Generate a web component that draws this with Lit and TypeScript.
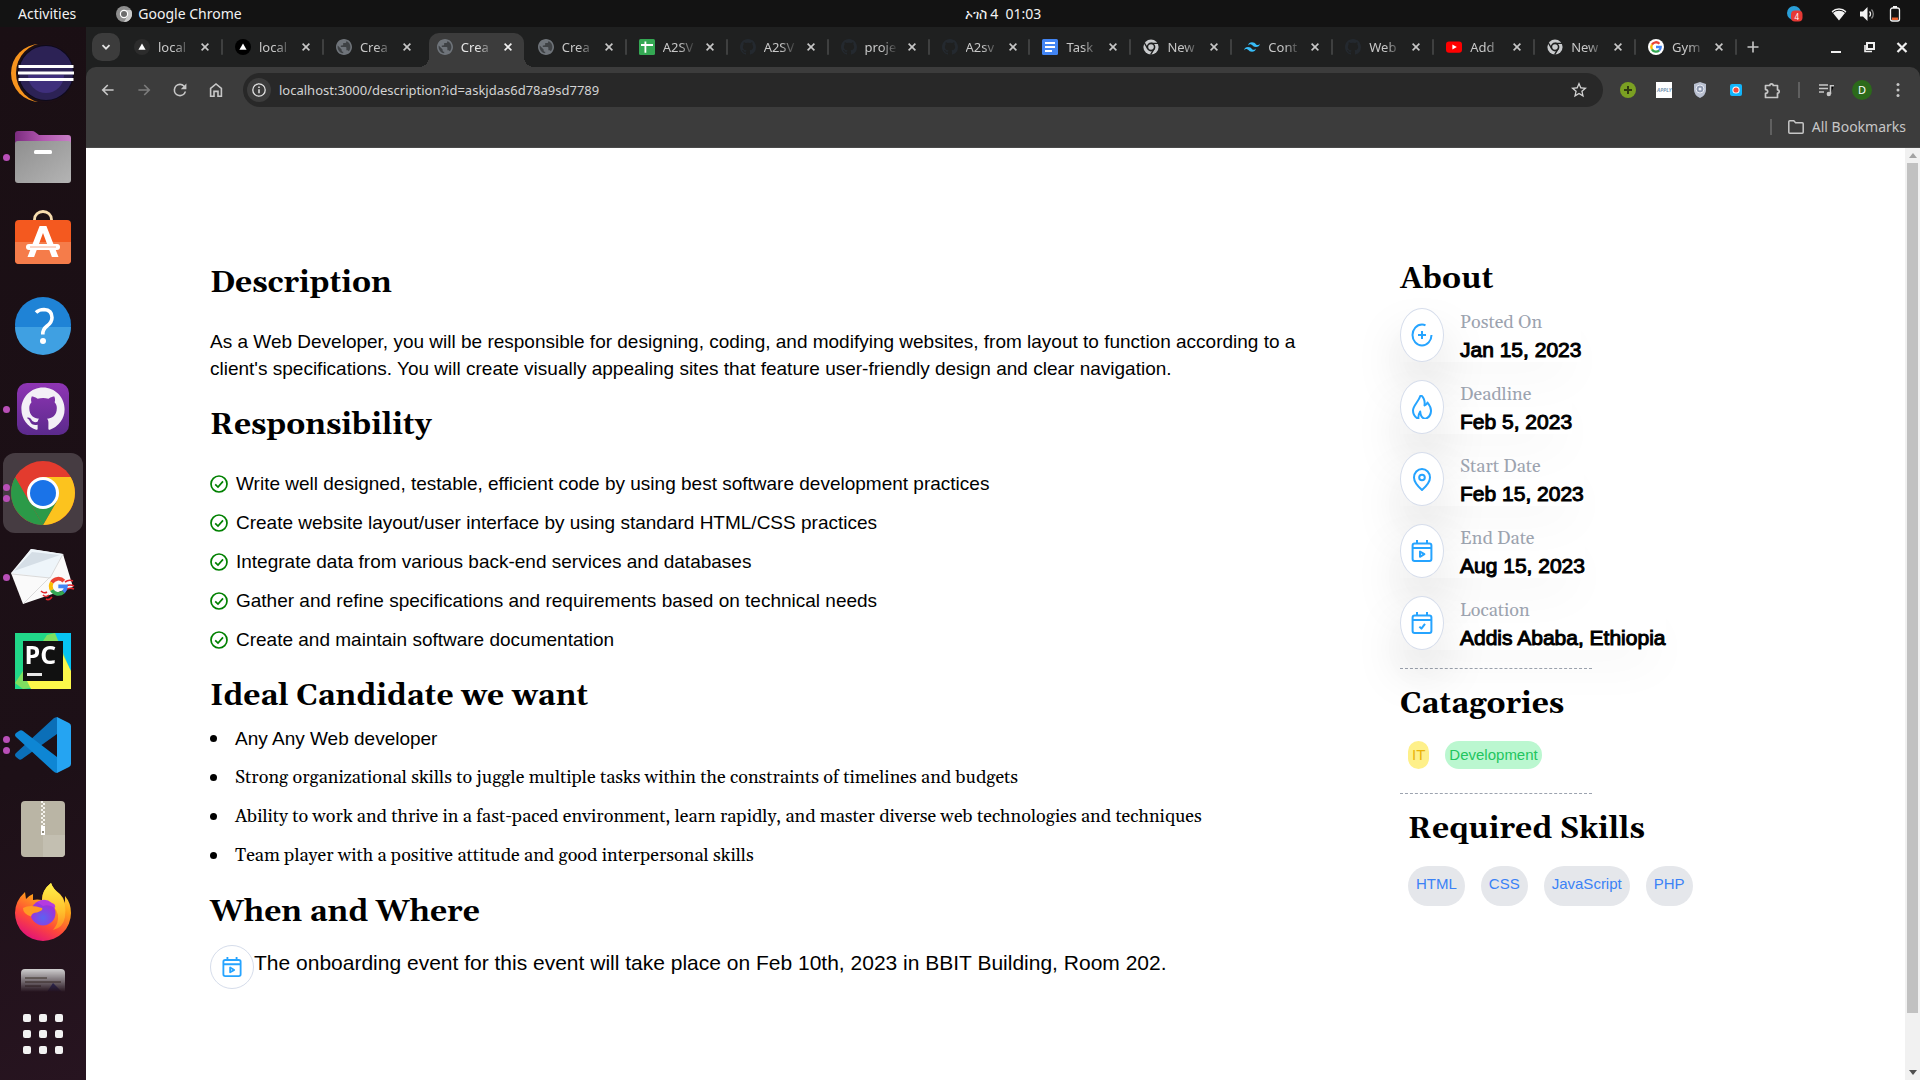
import { LitElement, html, css, svg, nothing } from "lit";
import { customElement } from "lit/decorators.js";
import { classMap } from "lit/directives/class-map.js";

const octocat =
  "M8 0C3.58 0 0 3.58 0 8c0 3.54 2.29 6.53 5.47 7.59.4.07.55-.17.55-.38 0-.19-.01-.82-.01-1.49-2.01.37-2.53-.49-2.69-.94-.09-.23-.48-.94-.82-1.13-.28-.15-.68-.52-.01-.53.63-.01 1.08.58 1.23.82.72 1.21 1.87.87 2.33.66.07-.52.28-.87.51-1.07-1.78-.2-3.64-.89-3.64-3.95 0-.87.31-1.59.82-2.15-.08-.2-.36-1.02.08-2.12 0 0 .67-.21 2.2.82.64-.18 1.32-.27 2-.27s1.36.09 2 .27c1.53-1.04 2.2-.82 2.2-.82.44 1.1.16 1.92.08 2.12.51.56.82 1.27.82 2.15 0 3.07-1.87 3.75-3.65 3.95.29.25.54.73.54 1.48 0 1.07-.01 1.93-.01 2.2 0 .21.15.46.55.38A8.01 8.01 0 0 0 16 8c0-4.42-3.58-8-8-8z";

const googleArcs = svg`
  <g fill="none" stroke-width="4.4">
    <path stroke="#ea4335" d="M4.4 7.6A8.8 8.8 0 0 1 18.4 5.9"/>
    <path stroke="#fbbc05" d="M4.4 16.4A8.8 8.8 0 0 1 4.4 7.6"/>
    <path stroke="#34a853" d="M18 18.4A8.8 8.8 0 0 1 4.4 16.4"/>
    <path stroke="#4285f4" d="M12 12h8.8A8.8 8.8 0 0 1 18 18.4"/>
  </g>`;

/* Favicons, all drawn in a 16px box. */
const triangle = (disc: string) => html`<svg width="16" height="16" viewBox="0 0 16 16">
  <circle cx="8" cy="8" r="8" fill=${disc}/><path fill="#fff" d="M8 4.4l3.6 6.4H4.4z"/></svg>`;
const globe = html`<svg width="16" height="16" viewBox="2 2 20 20">
  <circle cx="12" cy="12" r="9" fill="#3f4245"/>
  <path fill="#6f747a" d="M12 2C6.48 2 2 6.48 2 12s4.48 10 10 10 10-4.48 10-10S17.52 2 12 2zm-1 17.93c-3.95-.49-7-3.85-7-7.93 0-.62.08-1.21.21-1.79L9 15v1c0 1.1.9 2 2 2v1.93zm6.9-2.54c-.26-.81-1-1.39-1.9-1.39h-1v-3c0-.55-.45-1-1-1H8v-2h2c.55 0 1-.45 1-1V7h2c1.1 0 2-.9 2-2v-.41c2.93 1.19 5 4.06 5 7.41 0 2.08-.8 3.97-2.1 5.39z"/></svg>`;
const sheets = html`<svg width="16" height="16" viewBox="0 0 16 16">
  <rect width="16" height="16" rx="1.5" fill="#34a853"/><path stroke="#fff" stroke-width="1.8" d="M2 6h12M6.4 2.4v11.4"/></svg>`;
const hub = html`<svg width="16" height="16" viewBox="0 0 16 16"><path fill="#24292f" d=${octocat}/></svg>`;
const docs = html`<svg width="16" height="16" viewBox="0 0 16 16">
  <rect width="16" height="16" rx="1.5" fill="#4285f4"/><path stroke="#fff" stroke-width="1.8" d="M3 4h10M3 8h10M3 12h7"/></svg>`;
const chromeMono = html`<svg width="16" height="16" viewBox="0 0 16 16">
  <circle cx="8" cy="8" r="7.6" fill="#c9cbcd"/>
  <circle cx="8" cy="8" r="3.6" fill="#c9cbcd" stroke="#1f2020" stroke-width="1.6"/>
  <path stroke="#1f2020" stroke-width="1.4" d="M8 4.4h7M4.9 9.8L1.4 4M11.1 9.8L7.6 15.6"/></svg>`;
const tailwind = html`<svg width="16" height="16" viewBox="2 2 20 20">
  <path fill="#38bdf8" d="M12 6.036c-2.667 0-4.333 1.325-5 3.976 1-1.325 2.167-1.822 3.5-1.491.761.189 1.305.738 1.906 1.345C13.387 10.855 14.522 12 17 12c2.667 0 4.333-1.325 5-3.976-1 1.325-2.166 1.822-3.5 1.491-.761-.189-1.305-.738-1.907-1.345-.98-.99-2.114-2.134-4.593-2.134zM7 12c-2.667 0-4.333 1.325-5 3.976 1-1.326 2.167-1.822 3.5-1.491.761.189 1.305.738 1.906 1.345.98.989 2.115 2.134 4.594 2.134 2.667 0 4.333-1.325 5-3.976-1 1.325-2.167 1.822-3.5 1.491-.761-.189-1.305-.738-1.906-1.345C10.613 13.145 9.478 12 7 12z"/></svg>`;
const youtube = html`<svg width="16" height="16" viewBox="0 0 16 16">
  <rect y="2.4" width="16" height="11.4" rx="3" fill="#f00"/><path fill="#fff" d="M6.4 5.6v5l4.4-2.5z"/></svg>`;
const google = html`<svg width="16" height="16" viewBox="-3 -3 30 30"><circle cx="12" cy="12" r="15" fill="#fff"/>${googleArcs}</svg>`;

interface Tab {
  title: string;
  icon: unknown;
  active?: boolean;
  noRule?: boolean;
}

const tabs: Tab[] = [
  { title: "local", icon: triangle("#2c2c2c") },
  { title: "local", icon: triangle("#000") },
  { title: "Crea", icon: globe, noRule: true },
  { title: "Crea", icon: globe, active: true, noRule: true },
  { title: "Crea", icon: globe },
  { title: "A2SV", icon: sheets },
  { title: "A2SV", icon: hub },
  { title: "proje", icon: hub },
  { title: "A2sv", icon: hub },
  { title: "Task", icon: docs },
  { title: "New", icon: chromeMono },
  { title: "Cont", icon: tailwind },
  { title: "Web", icon: hub },
  { title: "Add", icon: youtube },
  { title: "New", icon: chromeMono },
  { title: "Gym", icon: google },
];

const uiFont = css`"Noto Sans", "Open Sans", sans-serif`;

@customElement("system-bar")
export class SystemBar extends LitElement {
  static styles = css`
    :host {
      display: grid;
      grid-template-columns: 1fr auto 1fr;
      align-items: center;
      height: 27px;
      background: #131313;
      color: #f2f2f2;
      font: 14px/27px ${uiFont};
    }
    .left, .right, .app { display: flex; align-items: center; }
    .left { gap: 40px; padding-left: 18px; }
    .right { justify-content: flex-end; gap: 12px; padding-right: 17px; }
    .app { gap: 6px; }
    .tray { margin-right: 16px; }
    svg { display: block; }
    button { all: unset; }
    time { white-space: pre; padding-left: 86px; }
  `;

  render() {
    return html`
      <div class="left">
        <button>Activities</button>
        <span class="app">
          <svg width="16" height="16" viewBox="0 0 16 16"><circle cx="8" cy="8" r="8" fill="#8e8e8e"/><path fill="#c9c9c9" d="M8 4h7a8 8 0 0 1-7 12l3.4-6z"/><circle cx="8" cy="8" r="4.2" fill="#fff"/><circle cx="8" cy="8" r="3" fill="#6d6d6d"/></svg>
          Google Chrome
        </span>
      </div>
      <time lang="am">ኦገስ 4  01:03</time>
      <div class="right">
        <svg class="tray" width="16" height="16" viewBox="0 0 16 16">
          <circle cx="7" cy="7" r="7" fill="#2a9fd8"/><rect x="4" y="4.600" width="11.500" height="11" rx="4" fill="#e53935"/>
          <text x="7.500" y="13.600" font-size="8" fill="#fff" font-family="Noto Sans">4</text>
        </svg>
        <svg width="16" height="16" viewBox="0 0 16 16"><path fill="#f2f2f2" d="M8 14.500L.6 5.200A11 11 0 0 1 15.400 5.200z"/><path fill="none" stroke="#131313" d="M2 6.500a9 9 0 0 1 12 0"/></svg>
        <svg width="16" height="16" viewBox="0 0 16 16"><path fill="#f2f2f2" d="M1 5.500h3L8.500 1v14L4 10.500H1z"/><path fill="none" stroke="#f2f2f2" stroke-width="1.300" d="M10.500 5.500a3.500 3.500 0 0 1 0 5"/><path fill="none" stroke="#8a8a8a" stroke-width="1.300" d="M12.500 3.500a6.500 6.500 0 0 1 0 9"/></svg>
        <svg width="16" height="16" viewBox="0 0 16 16"><rect x="3.500" y="2" width="9" height="13" rx="2" fill="none" stroke="#f2f2f2" stroke-width="1.300"/><path fill="#f2f2f2" d="M6 0h4v2H6z"/><path fill="#e8602c" d="M5 11.500h6V14H5z"/></svg>
      </div>`;
  }
}

interface DockItem {
  label: string;
  running?: number;
  focused?: boolean;
  art: unknown;
}

const dockItems: DockItem[] = [
  {
    label: "Eclipse",
    art: svg`
      <ellipse cx="29" cy="32" rx="29" ry="29" fill="#f7941e"/>
      <ellipse cx="34" cy="32" rx="29" ry="30" fill="#1c0f16"/>
      <circle cx="35" cy="32" r="28" fill="#0d0a1c"/>
      <circle cx="35" cy="32" r="27" fill="#2c2255"/>
      <path fill="#3f2f7c" d="M17 34h36a18 18 0 0 1-36 0z"/>
      <path stroke="#fff" stroke-width="3" d="M7.500 25.600h55M7 32h56M7.500 38.400h55"/>`,
  },
  {
    label: "Files",
    running: 1,
    art: svg`
      <defs><linearGradient id="purple"><stop stop-color="#7b2c7f"/><stop offset=".5" stop-color="#b257b0"/><stop offset="1" stop-color="#c77fc6"/></linearGradient>
      <linearGradient id="steel" x2="1" y2="1"><stop stop-color="#8f8f8f"/><stop offset="1" stop-color="#b4b4b4"/></linearGradient></defs>
      <path fill="url(#purple)" d="M4 9q0-3 3-3h14q2 0 3 1l4 3h29q3 0 3 3v12H4z"/>
      <rect x="4" y="16" width="56" height="42" rx="3" fill="url(#steel)"/>
      <rect x="23" y="25" width="18" height="4" rx="1.500" fill="#fff"/>`,
  },
  {
    label: "Ubuntu Software",
    art: svg`
      <path fill="none" stroke="#f6dcae" stroke-width="2.800" d="M23.500 13V10.500a8.500 8 0 0 1 17 0V13"/>
      <rect x="4" y="11" width="56" height="44" rx="4" fill="#f4591f"/>
      <path fill="#f57c4a" d="M4 33h56v18q0 4-4 4H8q-4 0-4-4z"/>
      <path fill="#fff" fill-rule="evenodd" d="M28.600 17h6.800L47.500 48h-6.600L32 24l-8.900 24h-6.600z"/>
      <rect x="15" y="35" width="34" height="6" rx="3" fill="#fff"/>
      <path stroke="#fac9b4" stroke-width="1.500" d="M19 38h26"/>`,
  },
  {
    label: "Help",
    art: svg`
      <circle cx="32" cy="32" r="28" fill="#1f83d6"/>
      <path fill="#3fa0e2" d="M4 34h56a28 28 0 0 1-56 0z"/>
      <path fill="none" stroke="#fff" stroke-width="3.600" d="M25 19.500q3-3 8-3 8 .5 8 8 0 5-5 8.500-4.500 3.500-4.200 8.500"/>
      <circle cx="32" cy="48" r="3" fill="#fff"/>`,
  },
  {
    label: "GitHub Desktop",
    running: 1,
    art: svg`
      <defs><linearGradient id="violet" x2="0" y2="1"><stop stop-color="#8f35b4"/><stop offset="1" stop-color="#5b2a8c"/></linearGradient></defs>
      <rect x="6" y="6" width="52" height="52" rx="10" fill="url(#violet)"/>
      <path fill="#f3f0f6" transform="translate(10.400 10.600) scale(2.700)" d=${octocat}/>`,
  },
  {
    label: "Google Chrome",
    running: 2,
    focused: true,
    art: svg`
      <circle cx="32" cy="32" r="32" fill="#e33b2e"/>
      <path fill="#2b9a48" d="M4.300 16L18.100 40 32 64A32 32 0 0 1 4.300 16z"/>
      <path fill="#fcc31e" d="M32 16h27.700A32 32 0 0 1 32 64l13.900-24z"/>
      <path fill="#2b9a48" d="M32 64l13.900-24H18.100z"/>
      <path fill="#e33b2e" d="M4.300 16L18.100 40 32 16z"/>
      <circle cx="32" cy="32" r="16" fill="#fff"/><circle cx="32" cy="32" r="13" fill="#1a73e8"/>`,
  },
  {
    label: "Mail",
    running: 1,
    art: svg`
      <path fill="#fafafa" d="M0 28L20 4l32 5 10 33-50 17z"/>
      <path fill="#eef5fa" d="M1 28L20 4l32 5-13 24z"/>
      <path fill="#d5dee6" d="M3 26L21 7l28 3z"/>
      <path fill="none" stroke="#dadada" d="M1 29l38 4L52 9M12 59l27-27"/>
      <g fill="none" stroke="#e2252b" stroke-width="1.600"><path d="M30 46q3 3 6 1M32 50q3 3 6 0M35 54q3 2 6-2M54 37q4-3 8-1M55 41q4-2 8 0M54 45q4-3 9-1"/></g>
      <g transform="translate(37 31) scale(.86)">${googleArcs}</g>`,
  },
  {
    label: "PyCharm",
    art: svg`
      <rect x="4" y="4" width="56" height="56" fill="#21d789"/>
      <path fill="#07c3f2" d="M44 4h16v44z"/><path fill="#a8e34f" d="M36 6l8-2 14 34-20 18-26 4-8-6z" opacity=".7"/>
      <path fill="#fcf84a" d="M46 14l14 28v18H20l-4-8z"/>
      <rect x="12" y="12" width="40" height="40" fill="#111"/>
      <text x="13.500" y="35" font-size="25" font-weight="700" fill="#fff" font-family="Open Sans">PC</text>
      <path fill="#e8e8e8" d="M16 44h15v3H16z"/>`,
  },
  {
    label: "Visual Studio Code",
    running: 2,
    art: svg`
      <g transform="translate(4 4)">
        <path fill="#0b6fb8" d="M1 36L39 1l3-1v17L7 42q-2 1.500-3.500 0L1 40q-2-2 0-4z"/>
        <path fill="#0e86d4" d="M1 20q-2-2 0-4l3-2q2-1.500 4 0l34 26v16q-2 0-4-2z"/>
        <path fill="#25a4f2" d="M42 0l12 6q2 1 2 3v38q0 2-2 3l-12 6z"/>
      </g>`,
  },
  {
    label: "Archive Manager",
    art: svg`
      <rect x="10" y="4" width="44" height="56" rx="4" fill="#bab5a5"/>
      <path fill="#c3bfb1" d="M32 38h22v18q0 4-4 4H32z"/>
      <path stroke="#f4f2ec" stroke-width="2" stroke-dasharray="2 2" d="M31 4v26M33 6v24"/>
      <rect x="30" y="29" width="4" height="9" fill="#fff"/><rect x="31" y="34" width="2" height="2" fill="#8e897b"/>`,
  },
  {
    label: "Firefox",
    art: svg`
      <defs>
        <linearGradient id="fire" x1=".8" y1="0" x2=".3" y2="1"><stop stop-color="#fff14a"/><stop offset=".35" stop-color="#ffa31a"/><stop offset=".68" stop-color="#ff4a38"/><stop offset="1" stop-color="#e0107c"/></linearGradient>
        <radialGradient id="orb" cx=".5" cy=".7"><stop stop-color="#5a63f2"/><stop offset="1" stop-color="#9a35dc"/></radialGradient>
        <linearGradient id="flame" x2="0" y2="1"><stop stop-color="#fff14a"/><stop offset=".6" stop-color="#ffc02c"/><stop offset="1" stop-color="#ff8a22"/></linearGradient>
      </defs>
      <g transform="translate(4 2)">
        <path fill="url(#fire)" d="M10 9l1 7q2-3 7-5v6q4-1 9 0Q27 7 36 0q2 6 9 11 4 4 5 9v-7q6 7 6 17a28 28 0 1 1-56 0Q0 18 10 9z"/>
        <path fill="url(#flame)" d="M27 17Q27 7 36 0q2 6 9 12 7 8 5 22-2 11-12 13 6-7 5-15Q40 20 27 17z"/>
        <circle cx="28" cy="30" r="12.500" fill="url(#orb)"/>
        <path fill="#b53be0" d="M22 19q8-5 15 1 4 1 3 5-6-4-12-2z"/>
        <path fill="#ff9a24" d="M8 25q7-4 19 0 2 2-5 4.500-5 0-6 4Q8 31 8 25z"/>
      </g>`,
  },
  {
    label: "Document Viewer",
    art: svg`
      <rect x="10" y="4" width="44" height="56" rx="4" fill="#d8d8d8"/>
      <path stroke="#8f8b80" stroke-width="2" d="M14 13h22M14 17h36M14 21h16"/><path fill="#3949ab" d="M42 18l18 18H30z"/>`,
  },
];

@customElement("app-dock")
export class AppDock extends LitElement {
  static styles = css`
    :host {
      display: flex;
      flex-direction: column;
      min-height: 0;
      background: linear-gradient(160deg, #1a0f14, #1d1017 70%, #271420);
    }
    .items {
      flex: 1;
      min-height: 0;
      margin: 0;
      padding: 6px 3px 0;
      overflow: hidden;
      list-style: none;
      mask-image: linear-gradient(#000 calc(100% - 24px), transparent);
    }
    .item {
      position: relative;
      display: grid;
      place-items: center;
      height: 80px;
      margin-bottom: 4px;
      border-radius: 12px;
      box-sizing: border-box;
    }
    .focused { background: #463c42; }
    .launch { all: unset; display: block; }
    svg { display: block; }
    .dots {
      position: absolute;
      left: 0;
      top: 0;
      bottom: 0;
      display: flex;
      flex-direction: column;
      justify-content: center;
      gap: 4px;
    }
    .dot { width: 7px; height: 7px; border-radius: 50%; background: #b94fb8; }
    .apps { all: unset; align-self: center; padding: 22px 0 26px; }
  `;

  render() {
    return html`
      <ul class="items">
        ${dockItems.map(
          (item) => html`
            <li class=${classMap({ item: true, focused: !!item.focused })}>
              ${item.running
                ? html`<span class="dots">${Array.from({ length: item.running }, () => html`<i class="dot"></i>`)}</span>`
                : nothing}
              <button class="launch" aria-label=${item.label}>
                <svg width="64" height="64" viewBox="0 0 64 64">${item.art}</svg>
              </button>
            </li>`,
        )}
      </ul>
      <button class="apps" aria-label="Show applications">
        <svg width="40" height="40" viewBox="0 0 40 40" fill="#f2f2f2">
          ${[0, 16, 32].map((y) => [0, 16, 32].map((x) => svg`<rect x=${x} y=${y} width="8" height="8" rx="2"/>`))}
        </svg>
      </button>`;
  }
}

@customElement("browser-frame")
export class BrowserFrame extends LitElement {
  static styles = css`
    :host { display: block; background: #1f2020; color: #c7c7c7; font: 14px/20px ${uiFont}; }
    button { all: unset; display: grid; place-items: center; flex: none; }
    svg { display: block; flex: none; }
    .strip { display: flex; align-items: flex-end; height: 40px; padding-left: 6px; }
    .search { width: 28px; height: 28px; margin: 0 2px 6px 0; border-radius: 10px; background: #3c3c3c; }
    .tabs { display: flex; flex: 0 1 1615px; min-width: 0; }
    .tab {
      position: relative;
      display: flex;
      flex: 1;
      align-items: center;
      min-width: 0;
      height: 34px;
      padding-left: 12px;
      padding-bottom: 6px;
      box-sizing: border-box;
    }
    .tab.active { color: #e6e6e6; z-index: 1; }
    .tab.active::before {
      content: "";
      position: absolute;
      inset: 0 2px 0 4px;
      border-radius: 10px 10px 0 0;
      background: #3c3c3c;
    }
    .flare { position: absolute; bottom: 0; width: 10px; height: 10px; }
    .flare.start { left: -6px; background: radial-gradient(circle at 0 0, transparent 10px, #3c3c3c 10px); }
    .flare.end { right: -8px; background: radial-gradient(circle at 100% 0, transparent 10px, #3c3c3c 10px); }
    .face { all: unset; position: relative; display: flex; gap: 8px; align-items: center; width: 57px; }
    .title {
      flex: 1;
      min-width: 0;
      overflow: hidden;
      font-size: 13px;
      white-space: nowrap;
      mask-image: linear-gradient(90deg, #000 50%, transparent);
    }
    .close { position: relative; width: 16px; height: 16px; margin-left: 6px; }
    .tab.ruled::after {
      content: "";
      position: absolute;
      right: 0;
      top: 6px;
      width: 2px;
      height: 16px;
      border-radius: 1px;
      background: #3f4040;
    }
    .add { width: 28px; height: 28px; margin: 0 0 6px 2px; }
    .window { display: flex; gap: 17px; margin: 0 10px 12px auto; }
    .panel { background: #3c3c3c; border-radius: 10px 10px 0 0; border-bottom: 1px solid #4a4a4a; }
    .tools { display: flex; align-items: center; padding: 6px 14px 0 14px; height: 34px; }
    .nav { display: flex; gap: 20px; margin-right: 19px; }
    .omni {
      display: flex;
      flex: 1;
      align-items: center;
      height: 34px;
      padding: 0 16px 0 4px;
      gap: 8px;
      border-radius: 17px;
      background: #282828;
      box-sizing: border-box;
    }
    .info { width: 24px; height: 24px; border-radius: 50%; background: #3c3c3c; }
    .url { all: unset; flex: 1; min-width: 0; color: #d3d3d3; font-size: 13px; }
    .ext { display: flex; align-items: center; gap: 20px; margin-left: 17px; }
    .ext button { width: 16px; height: 16px; }
    .ext .bar { width: 2px; height: 16px; margin: 0 -2px; background: #606060; }
    .ext .avatar {
      width: 20px;
      height: 20px;
      margin: 0 -2px;
      border-radius: 50%;
      background: #2c6a1b;
      color: #fff;
      font-size: 11px;
      line-height: 20px;
    }
    .marks { display: flex; justify-content: flex-end; align-items: center; gap: 16px; height: 40px; padding-right: 14px; }
    .marks .bar { width: 2px; height: 16px; background: #606060; }
    .all { display: flex; gap: 8px; align-items: center; }
  `;

  render() {
    const x = (color: string) =>
      html`<svg width="8" height="8" viewBox="0 0 8 8"><path stroke=${color} stroke-width="1.600" d="M.6.6l6.800 6.800M7.400.6L.6 7.400"/></svg>`;
    return html`
      <div class="strip">
        <button class="search" aria-label="Search tabs">
          <svg width="10" height="10" viewBox="0 0 10 10"><path fill="none" stroke="#e3e3e3" stroke-width="1.800" d="M1.500 3.200L5 6.700l3.500-3.500"/></svg>
        </button>
        <div class="tabs" role="tablist">
          ${tabs.map(
            (tab) => html`
              <div class=${classMap({ tab: true, active: !!tab.active, ruled: !tab.noRule })}>
                ${tab.active ? html`<i class="flare start"></i><i class="flare end"></i>` : nothing}
                <button class="face" role="tab" aria-selected=${tab.active ? "true" : "false"}>
                  ${tab.icon}<span class="title">${tab.title}</span>
                </button>
                <button class="close" aria-label="Close tab">${x(tab.active ? "#f0f0f0" : "#c7c7c7")}</button>
              </div>`,
          )}
        </div>
        <button class="add" aria-label="New tab">
          <svg width="12" height="12" viewBox="0 0 12 12"><path stroke="#c7c7c7" stroke-width="1.600" d="M6 .5v11M.5 6h11"/></svg>
        </button>
        <div class="window">
          <button aria-label="Minimize"><svg width="16" height="16" viewBox="0 0 16 16"><path fill="#f0f0f0" d="M3 12h10v2H3z"/></svg></button>
          <button aria-label="Restore"><svg width="16" height="16" viewBox="0 0 16 16"><path fill="none" stroke="#f0f0f0" stroke-width="2" d="M6 4h7v6H6z"/><path fill="none" stroke="#f0f0f0" stroke-width="1.600" d="M4 6v6.500h7"/></svg></button>
          <button aria-label="Close"><svg width="16" height="16" viewBox="0 0 16 16"><path stroke="#f0f0f0" stroke-width="2.200" d="M3.500 4l9 9M12.500 4l-9 9"/></svg></button>
        </div>
      </div>
      <div class="panel">
        <div class="tools">
          <div class="nav">
            <button aria-label="Back"><svg width="16" height="16" viewBox="2 2 20 20"><path fill="#c7c7c7" d="M19 11H7.830l4.590-4.590L11 5l-7 7 7 7 1.410-1.410L7.830 13H19z"/></svg></button>
            <button aria-label="Forward"><svg width="16" height="16" viewBox="2 2 20 20"><path fill="#7c7c7c" d="M5 11h11.170l-4.590-4.590L13 5l7 7-7 7-1.410-1.410L16.170 13H5z"/></svg></button>
            <button aria-label="Reload"><svg width="16" height="16" viewBox="2 2 20 20"><path fill="#c7c7c7" d="M17.650 6.350A7.960 7.960 0 0 0 12 4a8 8 0 1 0 7.730 10h-2.080A6 6 0 1 1 12 6c1.660 0 3.140.69 4.220 1.780L13 11h7V4z"/></svg></button>
            <button aria-label="Home"><svg width="16" height="16" viewBox="0 0 16 16"><path fill="none" stroke="#c7c7c7" stroke-width="1.600" d="M2.600 14.200V6.400L8 2l5.400 4.400v7.800H10V9.400H6v4.800z"/></svg></button>
          </div>
          <div class="omni">
            <button class="info" aria-label="View site information"><svg width="14" height="14" viewBox="0 0 14 14"><circle cx="7" cy="7" r="6.200" fill="none" stroke="#e3e3e3" stroke-width="1.300"/><path stroke="#e3e3e3" stroke-width="1.500" d="M7 6.200v4M7 3.500v1.500"/></svg></button>
            <input class="url" aria-label="Address" value="localhost:3000/description?id=askjdas6d78a9sd7789">
            <button aria-label="Bookmark this tab"><svg width="16" height="16" viewBox="2 2 20 20"><path fill="#d3d3d3" d="M22 9.240l-7.190-.62L12 2 9.190 8.630 2 9.240l5.460 4.730L5.820 21 12 17.270 18.180 21l-1.630-7.030L22 9.240zM12 15.400l-3.760 2.270 1-4.280-3.320-2.880 4.380-.38L12 6.100l1.710 4.040 4.380.38-3.320 2.880 1 4.280L12 15.400z"/></svg></button>
          </div>
          <div class="ext">
            <button aria-label="Add extension"><svg width="16" height="16" viewBox="0 0 16 16"><circle cx="8" cy="8" r="8" fill="#7ba022"/><path stroke="#2f3a10" stroke-width="2" d="M8 4v8M4 8h8"/></svg></button>
            <button aria-label="Apply extension"><svg width="16" height="16" viewBox="0 0 16 16"><path fill="#fff" d="M0 0h16v16H0z"/><text x="1" y="10" font-size="5" font-style="italic" font-weight="700" fill="#7d9ab5" font-family="Open Sans">APPLY</text></svg></button>
            <button aria-label="Shield extension"><svg width="16" height="16" viewBox="0 0 16 16"><path fill="#b9c0d0" d="M8 0l6 2v6q0 5-6 8-6-3-6-8V2z"/><circle cx="8" cy="7" r="4" fill="#8d97ae" stroke="#e8ebf2"/><circle cx="8" cy="7" r="1.500" fill="#e8ebf2"/></svg></button>
            <button aria-label="Recorder extension"><svg width="16" height="16" viewBox="0 0 16 16"><rect x="2" y="2" width="12" height="12" rx="2" fill="#12b5fb"/><circle cx="8" cy="8" r="3.600" fill="#fff"/><circle cx="8" cy="8" r="2.600" fill="#f4473a"/></svg></button>
            <button aria-label="Extensions"><svg width="17" height="17" viewBox="0 0 17 17"><path fill="none" stroke="#c7c7c7" stroke-width="1.700" stroke-linejoin="round" d="M1.500 3.500h4.300a1.700 1.700 0 0 1 3.400 0h4.300v4.300a1.700 1.700 0 0 1 0 3.400v4.300h-12v-4.100q2.200-.2 2.200-1.900t-2.200-1.900z"/></svg></button>
            <span class="bar"></span>
            <button aria-label="Media controls"><svg width="16" height="16" viewBox="0 0 16 16"><path stroke="#c7c7c7" stroke-width="1.600" d="M1 3h9M1 6.500h9M1 10h5M12.500 12V3.800H16"/><circle cx="10.800" cy="12" r="2.200" fill="#c7c7c7"/></svg></button>
            <button class="avatar" aria-label="Profile">D</button>
            <button aria-label="Menu"><svg width="16" height="16" viewBox="0 0 16 16" fill="#c7c7c7"><circle cx="8" cy="2.500" r="1.500"/><circle cx="8" cy="8" r="1.500"/><circle cx="8" cy="13.500" r="1.500"/></svg></button>
          </div>
        </div>
        <div class="marks">
          <span class="bar"></span>
          <button><span class="all"><svg width="16" height="14" viewBox="0 0 16 14"><path fill="none" stroke="#c7c7c7" stroke-width="1.500" d="M.8 1.800q0-1 1-1h4l1.800 2h6.600q1 0 1 1v8.400q0 1-1 1H1.800q-1 0-1-1z"/></svg>All Bookmarks</span></button>
        </div>
      </div>`;
  }
}

/* Outline icons of the event facts, all in a 24px box. */
const factArt = {
  added: svg`<path d="M15.500 2.300Q14 1.500 12 1.500A9.500 10.500 0 1 0 21.500 12"/><path d="M12 8v8M8 12h8"/>`,
  flame: svg`<path d="M8.500 24C5.500 22.500 3 19.500 3 15.500 3 10.500 8 8 10.800 0c3 2.500 4.400 6 3.700 10.500 1.400-.3 2.400-1.400 3-3 2.400 3 3.600 5.800 3.500 8.600-.2 3.600-2.200 6.400-5.600 7.900-2.800-.6-5-3-5.200-7.500-1.200 2-2.400 4-1.700 7.500z"/>`,
  pin: svg`<path d="M12 23C7.500 19 4 15 4 10.500a8 8.500 0 0 1 16 0c0 4.500-3.500 8.500-8 12.500z"/><circle cx="12" cy="10.500" r="2.800"/>`,
  play: svg`<rect x="2.600" y="4.400" width="18.800" height="17.600" rx="2"/><path d="M2.600 9h18.800M7 1v3.400M17 1v3.400M10 12.600v5.200l4.400-2.600z"/>`,
  check: svg`<rect x="2.600" y="4.400" width="18.800" height="17.600" rx="2"/><path d="M2.600 9h18.800M7 1v3.400M17 1v3.400M9.400 15.600l2 2 3.600-4.800"/>`,
};
const outline = (art: unknown, size = 24) => html`<svg class="glyph" width=${size} height=${size} viewBox="0 0 24 24" fill="none" stroke="#26a4ff" stroke-width="2" stroke-linejoin="round">${art}</svg>`;

const duties = [
  "Write well designed, testable, efficient code by using best software development practices",
  "Create website layout/user interface by using standard HTML/CSS practices",
  "Integrate data from various back-end services and databases",
  "Gather and refine specifications and requirements based on technical needs",
  "Create and maintain software documentation",
];
const traits = [
  "Strong organizational skills to juggle multiple tasks within the constraints of timelines and budgets",
  "Ability to work and thrive in a fast-paced environment, learn rapidly, and master diverse web technologies and techniques",
  "Team player with a positive attitude and good interpersonal skills",
];
const facts = [
  { label: "Posted On", value: "Jan 15, 2023", art: factArt.added },
  { label: "Deadline", value: "Feb 5, 2023", art: factArt.flame },
  { label: "Start Date", value: "Feb 15, 2023", art: factArt.pin },
  { label: "End Date", value: "Aug 15, 2023", art: factArt.play },
  { label: "Location", value: "Addis Ababa, Ethiopia", art: factArt.check },
];
const skills = ["HTML", "CSS", "JavaScript", "PHP"];

@customElement("job-page")
export class JobPage extends LitElement {
  static styles = css`
    :host {
      display: grid;
      grid-template-columns: 1fr 15px;
      min-height: 0;
      background: #fff;
      color: #000;
      font: 19px/27px "Liberation Sans", Arial, sans-serif;
    }
    .page {
      display: grid;
      grid-template-columns: minmax(0, 1fr) 505px;
      gap: 80px;
      align-items: start;
      padding-left: 124px;
    }
    .main { padding-top: 112px; }
    .side { padding-top: 108px; }
    h2 { margin: 0; font: bold 30px/46px Gelasio, Georgia, "Liberation Serif", serif; }
    p { margin: 0; }
    svg { display: block; }
    ul, dl { margin: 0; padding: 0; list-style: none; }
    .block + .block { margin-top: 20px; }
    .block p, .duties { margin-top: 22px; }
    .duties, .traits { display: grid; gap: 12px; }
    .duties li { display: flex; align-items: center; gap: 8px; }
    .traits { margin-top: 6px; }
    .traits li { display: flex; align-items: center; gap: 18px; }
    .traits li::before { content: ""; width: 7px; height: 7px; border-radius: 50%; background: #000; }
    .serif { font-family: Gelasio, Georgia, "Liberation Serif", serif; font-size: 18px; }
    .place { display: flex; margin-top: 10px; font-size: 21px; line-height: 36px; }
    .ring {
      display: grid;
      place-items: center;
      flex: none;
      width: 44px;
      height: 44px;
      border: 1px solid #d6ddeb;
      border-radius: 50%;
      background: #fff;
      box-sizing: border-box;
    }
    .facts { display: grid; gap: 18px; justify-items: start; margin-top: 6px; }
    .fact { display: flex; gap: 16px; box-shadow: 0 25px 50px -8px rgba(0, 0, 0, 0.03); }
    .fact .ring { position: relative; height: 54px; box-shadow: 0 25px 50px -8px rgba(0, 0, 0, 0.25); }
    .text { position: relative; }
    dt { color: #9ca3af; line-height: 29px; }
    dd { margin: 0; font-size: 21px; line-height: 25px; -webkit-text-stroke: 1px #000; }
    hr { width: 192px; margin: 18px 0 12px; border: 0; border-top: 1px dashed #9ca3af; }
    .chips { display: flex; gap: 16px; margin: 14px 0 24px 8px; font-size: 15px; line-height: 28px; }
    .chips li { padding: 0 4px; border-radius: 20px; }
    .it { background: #fef08a; color: #eab308; }
    .dev { background: #bbf7d0; color: #22c55e; }
    .inset { padding-left: 8px; }
    .skills { line-height: 36px; margin-bottom: 0; }
    .skills li { height: 40px; padding: 0 8px; background: #e5e7eb; color: #3b82f6; }
    .scroll { display: flex; flex-direction: column; align-items: center; background: #f1f1f1; }
    .arrow { padding: 5px 0; }
    .track { flex: 1; }
    .thumb { width: 11px; height: calc(94% + 2px); background: #c1c1c1; }
  `;

  render() {
    return html`
      <div class="page">
        <main class="main">
          <section class="block">
            <h2>Description</h2>
            <p>As a Web Developer, you will be responsible for designing, coding, and modifying websites, from layout to function according to a client's specifications. You will create visually appealing sites that feature user-friendly design and clear navigation.</p>
          </section>
          <section class="block">
            <h2>Responsibility</h2>
            <ul class="duties">
              ${duties.map(
                (duty) => html`<li><svg width="18" height="18" viewBox="0 0 18 18" fill="none" stroke="#008000" stroke-width="1.700"><circle cx="9" cy="9" r="8"/><path d="M5.200 9.300l2.800 2.700 5-5.600"/></svg>${duty}</li>`,
              )}
            </ul>
          </section>
          <section class="block">
            <h2>Ideal Candidate we want</h2>
            <ul class="traits">
              <li>Any Any Web developer</li>
              ${traits.map((trait) => html`<li class="serif">${trait}</li>`)}
            </ul>
          </section>
          <section class="block">
            <h2>When and Where</h2>
            <div class="place">
              <span class="ring">${outline(factArt.play, 22)}</span>
              <span>The onboarding event for this event will take place on Feb 10th, 2023 in BBIT Building, Room 202.</span>
            </div>
          </section>
        </main>
        <aside class="side">
          <h2>About</h2>
          <dl class="facts">
            ${facts.map(
              (fact) => html`
                <div class="fact">
                  <span class="ring">${outline(fact.art)}</span>
                  <div class="text"><dt class="serif">${fact.label}</dt><dd>${fact.value}</dd></div>
                </div>`,
            )}
          </dl>
          <hr>
          <h2>Catagories</h2>
          <ul class="chips"><li class="it">IT</li><li class="dev">Development</li></ul>
          <hr>
          <h2 class="inset">Required Skills</h2>
          <ul class="chips skills">${skills.map((skill) => html`<li>${skill}</li>`)}</ul>
        </aside>
      </div>
      <div class="scroll">
        <svg class="arrow" width="8" height="5" viewBox="0 0 8 5"><path fill="#a3a3a3" d="M4 0l4 5H0z"/></svg>
        <div class="track"><div class="thumb"></div></div>
        <svg class="arrow" width="8" height="5" viewBox="0 0 8 5"><path fill="#505050" d="M0 0h8L4 5z"/></svg>
      </div>`;
  }
}

@customElement("app-root")
export class AppRoot extends LitElement {
  static styles = css`
    :host {
      display: grid;
      grid-template: auto minmax(0, 1fr) / 86px minmax(0, 1fr);
      height: 100vh;
      overflow: hidden;
    }
    system-bar { grid-column: 1 / -1; }
    .browser { display: grid; grid-template-rows: auto minmax(0, 1fr); min-height: 0; }
  `;

  render() {
    return html`
      <system-bar></system-bar>
      <app-dock></app-dock>
      <div class="browser">
        <browser-frame></browser-frame>
        <job-page></job-page>
      </div>`;
  }
}
